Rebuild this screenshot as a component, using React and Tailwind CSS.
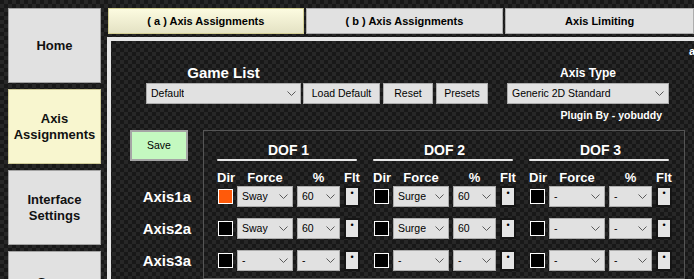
const dofs = [
  {
    name: "DOF 1",
    rows: [
      { dir: true, force: "Sway", pct: "60" },
      { dir: false, force: "Sway", pct: "60" },
      { dir: false, force: "-", pct: "-" }
    ]
  },
  {
    name: "DOF 2",
    rows: [
      { dir: false, force: "Surge", pct: "60" },
      { dir: false, force: "Surge", pct: "60" },
      { dir: false, force: "-", pct: "-" }
    ]
  },
  {
    name: "DOF 3",
    rows: [
      { dir: false, force: "-", pct: "-" },
      { dir: false, force: "-", pct: "-" },
      { dir: false, force: "-", pct: "-" }
    ]
  }
];

const axes = ["Axis1a", "Axis2a", "Axis3a"];

function Chevron() {
  return (
    <svg width="9" height="5" viewBox="0 0 9 5" className="shrink-0">
      <polyline points="0.5,0.5 4.5,4.5 8.5,0.5" fill="none" stroke="#5a5a5a" strokeWidth="1" />
    </svg>
  );
}

function Combo({ text, className }) {
  return (
    <div
      className={`flex h-[21px] items-center justify-between border border-[#adadad] bg-[#e1e1e1] pl-[4px] pr-[4px] text-[10.5px] text-black ${className}`}
    >
      <span className="truncate">{text}</span>
      <Chevron />
    </div>
  );
}

function Btn({ children, className }) {
  return (
    <div
      className={`flex h-[21px] items-center justify-center border border-[#adadad] bg-[#e1e1e1] text-[10.5px] text-black ${className}`}
    >
      {children}
    </div>
  );
}

function SideButton({ children, active, className = "" }) {
  return (
    <div
      className={`flex h-[75px] shrink-0 items-center justify-center border px-1 text-center text-[13px] font-bold leading-[16px] text-[#111] ${
        active ? "border-[#cfcb98] bg-[#f8f6cf]" : "border-[#a3a3a3] bg-[#e1e1e1]"
      } ${className}`}
    >
      {children}
    </div>
  );
}

function DofGroup({ dof }) {
  return (
    <div className="flex w-[143px] flex-col">
      <div className="mt-[11px] h-[16px] text-center text-[14px] font-bold leading-[16px] text-white">{dof.name}</div>
      <div className="mt-[1px] h-[2px] w-[140px] rounded-full bg-[#e6e6e6]" />
      <div className="mt-[9px] grid h-[15px] grid-cols-[16px_56px_43px_16px] gap-x-[4px] text-[13px] font-bold leading-[15px] text-white">
        <div className="whitespace-nowrap">Dir</div>
        <div className="text-center">Force</div>
        <div className="text-center">%</div>
        <div className="whitespace-nowrap text-center">Flt</div>
      </div>
      <div className="mt-[1px] flex flex-col gap-[11px]">
        {dof.rows.map((r, i) => (
          <div key={i} className="grid h-[21px] grid-cols-[16px_56px_43px_16px] items-center gap-x-[4px]">
            <div
              className={`ml-px h-[15px] w-[15px] border border-white ${r.dir ? "bg-[#ff5a0a]" : "bg-black"}`}
            />
            <Combo text={r.force} />
            <Combo text={r.pct} />
            <div className="flex h-[21px] justify-center border-2 border-[#151515] bg-[#e4e4e4] pt-[1px] text-[9px] leading-[9px] text-black">
              •
            </div>
          </div>
        ))}
      </div>
    </div>
  );
}

export default function App() {
  return (
    <div className="flex h-[279px] w-[694px] overflow-hidden bg-[#1e1e1e] bg-[image:repeating-conic-gradient(#272727_0_25%,#181818_0_50%)] bg-size-[8px_8px] font-['Liberation_Sans',Arial,sans-serif]">
      <aside className="ml-2 mt-2 flex w-[93px] shrink-0 flex-col gap-[6px]">
        <SideButton>Home</SideButton>
        <SideButton active>
          Axis
          <br />
          Assignments
        </SideButton>
        <SideButton>
          Interface
          <br />
          Settings
        </SideButton>
        <SideButton className="pt-[4px]">
          Game
          <br />
          Settings
        </SideButton>
      </aside>

      <main className="ml-[6px] flex min-w-0 flex-1 flex-col">
        <div className="mt-2 flex h-[26px] shrink-0 gap-[2px] pl-px text-[11px] font-bold text-black">
          <div className="flex w-[197px] items-center justify-center border border-[#d3ce93] bg-linear-to-b from-[#fcfbe0] to-[#e4e2c4]">
            ( a ) Axis Assignments
          </div>
          <div className="flex w-[199px] items-center justify-center border border-[#adadad] bg-[#e1e1e1]">
            ( b ) Axis Assignments
          </div>
          <div className="flex w-[190px] items-center justify-center border border-[#adadad] bg-[#e1e1e1]">
            Axis Limiting
          </div>
        </div>

        <section className="mt-[3px] flex flex-1 flex-col border-l-4 border-t-4 border-[#e6e6e6]">
          <div className="flex h-[81px] shrink-0">
            <div className="ml-[35px] mt-[23px] flex flex-col">
              <div className="h-[18px] w-[155px] text-center text-[15px] font-bold leading-[18px] text-white">
                Game List
              </div>
              <div className="mt-[1px] flex">
                <Combo text="Default" className="w-[155px]" />
                <Btn className="ml-[2px] w-[77px]">Load Default</Btn>
                <Btn className="ml-[3px] w-[50px]">Reset</Btn>
                <Btn className="ml-[3px] w-[52px]">Presets</Btn>
              </div>
            </div>
            <div className="ml-[19px] mt-[23px] flex w-[162px] flex-col">
              <div className="h-[18px] text-center text-[12px] font-bold leading-[18px] text-white">Axis Type</div>
              <Combo text="Generic 2D Standard" className="mt-[1px] w-[162px]" />
              <div className="mt-[5px] h-[13px] whitespace-nowrap pr-[7px] text-right text-[10.5px] font-bold leading-[13px] text-white">
                Plugin By - yobuddy
              </div>
            </div>
            <div className="ml-[20px] mt-[4px] text-[11px] font-bold leading-[13px] text-white">a</div>
          </div>

          <div className="mt-[8px] flex flex-1">
            <div className="flex w-[92px] shrink-0 flex-col">
              <div className="ml-[19px] flex h-[31px] w-[58px] items-center justify-center border-2 border-[#a5a5a5] bg-[#c4f9c0] text-[10.5px] text-black">
                Save
              </div>
              <div className="mt-[25px] flex flex-col gap-[11px] pr-[12px]">
                {axes.map((a) => (
                  <div key={a} className="flex h-[21px] items-center justify-end pt-[1px] text-[15px] font-bold text-white">
                    {a}
                  </div>
                ))}
              </div>
            </div>
            <div className="flex w-[482px] shrink-0 gap-[13px] border border-[#555] pl-[13px]">
              {dofs.map((d) => (
                <DofGroup key={d.name} dof={d} />
              ))}
            </div>
          </div>
        </section>
      </main>
    </div>
  );
}
